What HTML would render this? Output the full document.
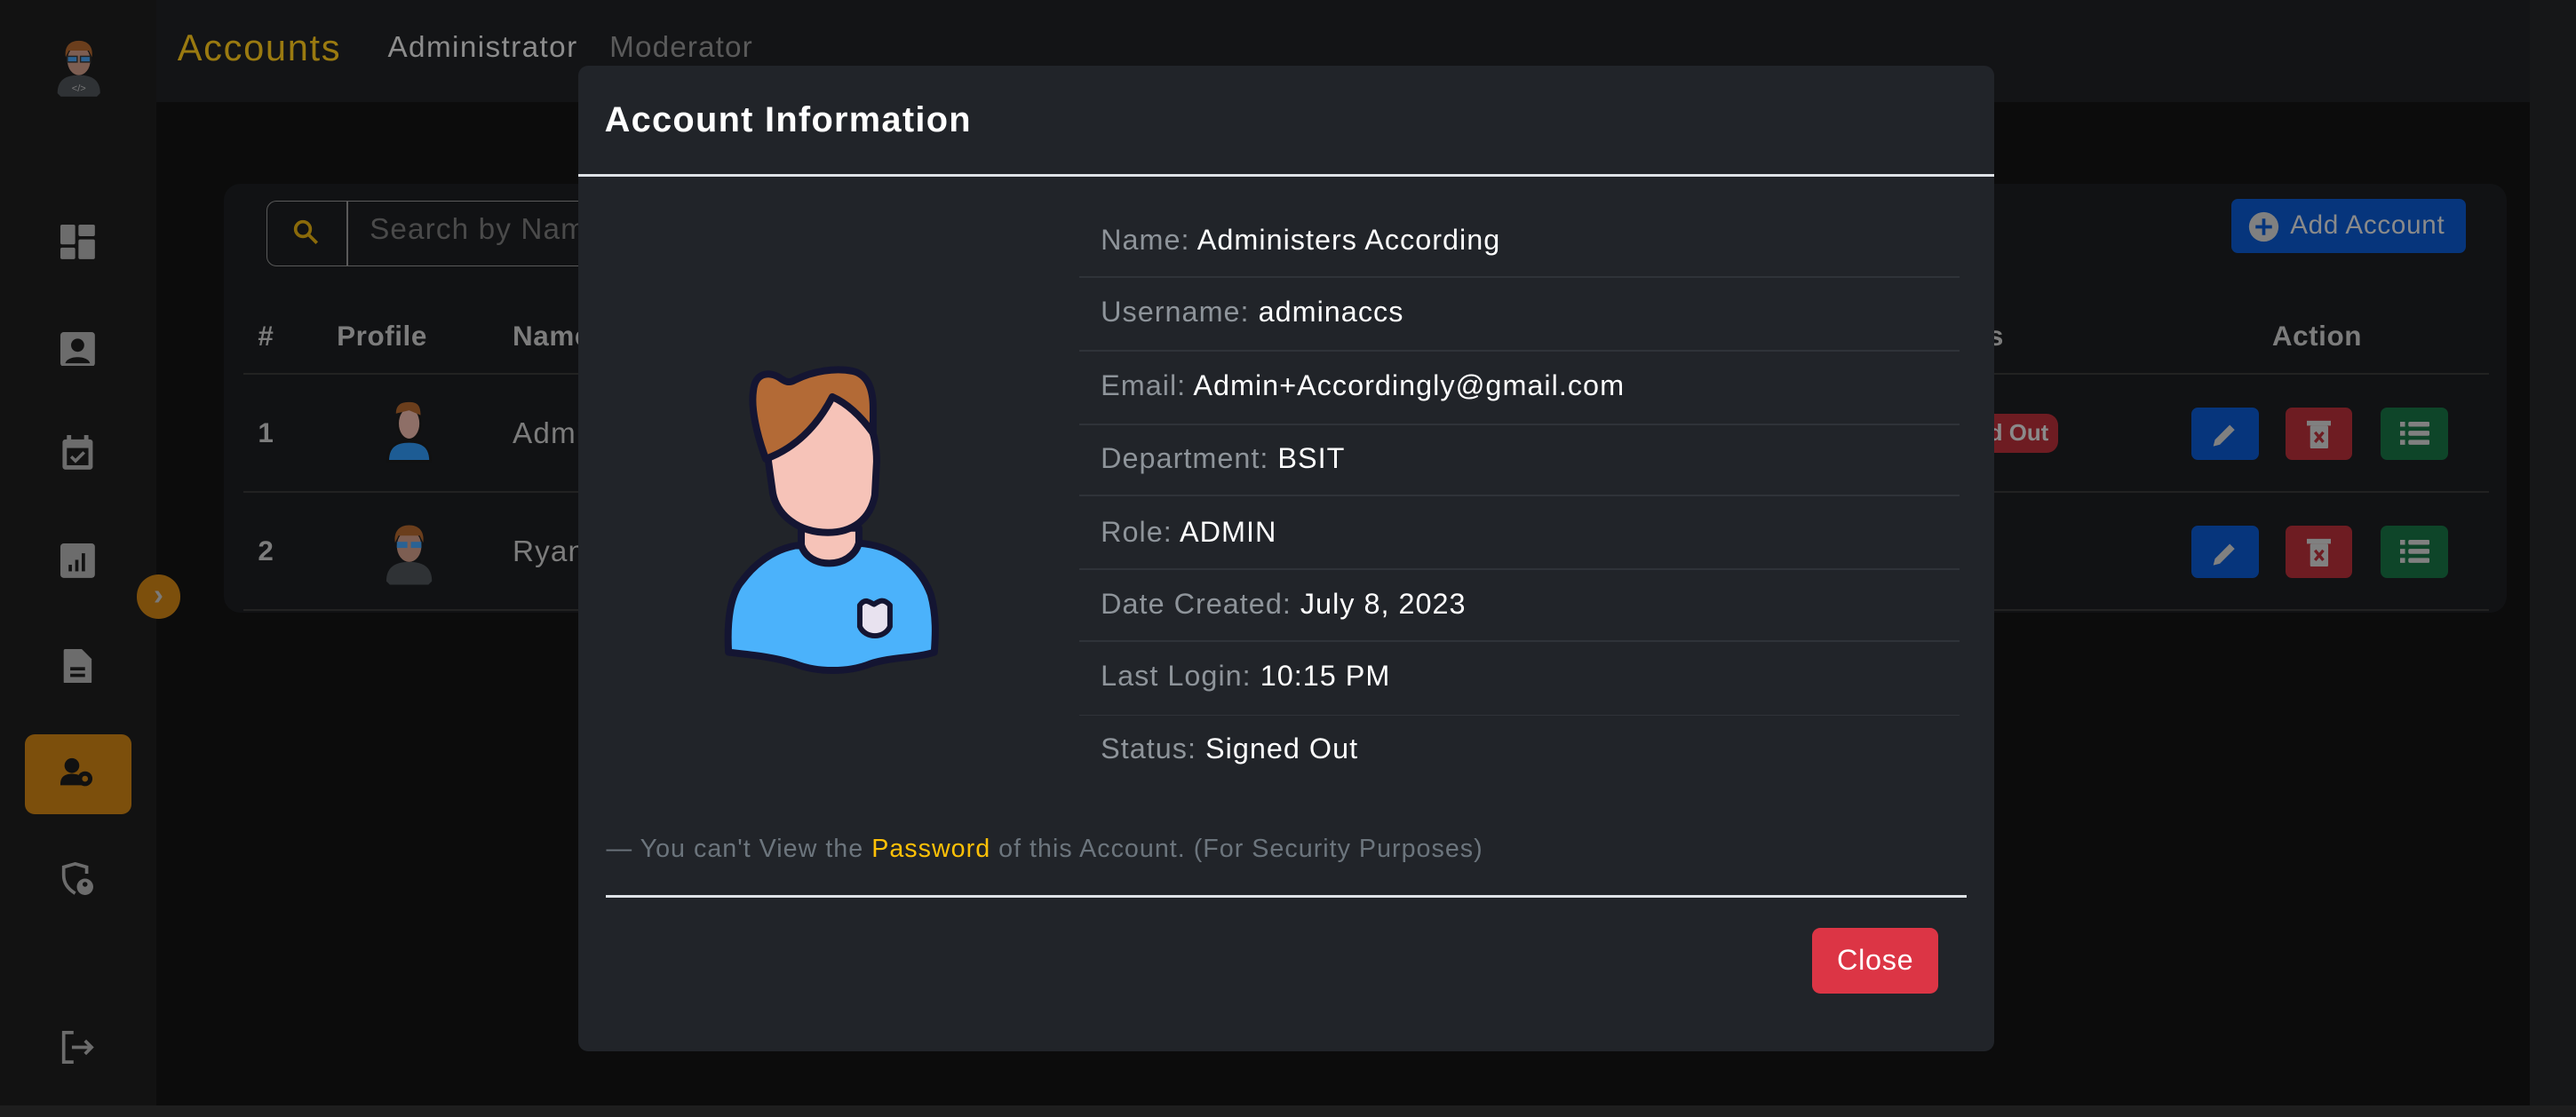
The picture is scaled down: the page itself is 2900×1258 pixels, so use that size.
<!DOCTYPE html>
<html><head><meta charset="utf-8"><style>
*{margin:0;padding:0;box-sizing:border-box}
html,body{width:2900px;height:1258px;overflow:hidden;background:#0c0c0c}
#w{zoom:1.84949;width:1568px;height:680px;position:relative;font-family:"Liberation Sans",sans-serif;overflow:hidden}
.a{position:absolute}
.ic{position:absolute;left:37px;width:21px;height:21px}
.hdr{color:#7c7c7c;font-weight:bold;font-size:17px;top:195px;letter-spacing:.3px}
.btn{position:absolute;width:41px;height:32px;border-radius:4px}
.lbl{position:absolute;left:670px;font-size:17.5px;color:#8e949a;letter-spacing:.55px}
.lbl b{font-weight:normal;color:#fff}
.sep{position:absolute;left:657px;width:536px;height:1px;background:#2f3339}
</style></head><body><div id="w">
<div class="a" style="left:0;top:0;width:95px;height:680px;background:#121212"></div>
<div class="a" style="left:95px;top:0;width:1473px;height:62px;background:#131416"></div>
<div class="a" style="left:1540px;top:0;width:28px;height:680px;background:#161718"></div>
<div class="a" style="left:0;top:673px;width:1568px;height:7px;background:#1e1e1e"></div>
<svg class="a" style="left:33px;top:24px" width="30" height="36" viewBox="0 0 30 36"><path d="M2 33c0-8 5-11 13-11s13 3 13 11l-2 2H4z" fill="#2f3235"/><ellipse cx="15" cy="13" rx="7" ry="9" fill="#7d5e52"/><path d="M7 11c-1-7 3-10 8-10s9 3 8 10l-2-4H9z" fill="#6b3e1c"/><rect x="8" y="10.5" width="6" height="3.5" fill="#2a6293" stroke="#222" stroke-width=".8"/><rect x="16" y="10.5" width="6" height="3.5" fill="#2a6293" stroke="#222" stroke-width=".8"/><text x="15" y="32" font-size="6" fill="#777" text-anchor="middle" font-family="Liberation Sans">&lt;/&gt;</text></svg>
<div class="a" style="left:108px;top:16px;font-size:22.5px;color:#9a7a10;letter-spacing:.9px">Accounts</div>
<div class="a" style="left:236px;top:19px;font-size:18px;color:#8c8c8c;letter-spacing:.75px">Administrator</div>
<div class="a" style="left:371px;top:19px;font-size:18px;color:#5a5a5a;letter-spacing:.6px">Moderator</div>
<svg class="ic" style="top:137px" viewBox="0 0 21 21" fill="#6c6c6c"><rect x="0" y="0" width="9" height="12" rx="1"/><rect x="11" y="0" width="10" height="7" rx="1"/><rect x="0" y="14" width="9" height="7" rx="1"/><rect x="11" y="9" width="10" height="12" rx="1"/></svg>
<svg class="ic" style="top:202px" viewBox="0 0 21 21"><rect x="0" y="0" width="21" height="21" rx="2" fill="#6c6c6c"/><circle cx="10.5" cy="8" r="4" fill="#121212"/><path d="M3 19c1-5 14-5 15 0z" fill="#121212"/></svg>
<svg class="ic" style="top:265px" viewBox="0 0 21 24"><rect x="0" y="3" width="21" height="21" rx="2" fill="#6c6c6c"/><rect x="3" y="9" width="15" height="12" fill="#121212"/><rect x="3" y="0" width="3" height="5" fill="#6c6c6c"/><rect x="15" y="0" width="3" height="5" fill="#6c6c6c"/><path d="M6 15l3 3 6-6" stroke="#6c6c6c" stroke-width="2.2" fill="none"/></svg>
<svg class="ic" style="top:331px" viewBox="0 0 21 21"><rect width="21" height="21" rx="2" fill="#6c6c6c"/><rect x="5" y="13" width="2" height="4" fill="#121212"/><rect x="9" y="10" width="2" height="7" fill="#121212"/><rect x="13" y="6" width="2" height="11" fill="#121212"/></svg>
<svg class="ic" style="top:395px" viewBox="0 0 21 21"><path d="M3 0h10l6 6v14a1 1 0 0 1-1 1H3a1 1 0 0 1-1-1V1a1 1 0 0 1 1-1z" fill="#6c6c6c"/><rect x="6" y="11" width="9" height="2" fill="#121212"/><rect x="6" y="15" width="9" height="2" fill="#121212"/></svg>
<div class="a" style="left:15px;top:447px;width:65px;height:49px;border-radius:6px;background:#7c4f0c"></div>
<svg class="a" style="left:37px;top:461px" width="22" height="20" viewBox="0 0 22 20" fill="#111"><circle cx="7" cy="5" r="4.5"/><path d="M0 16c0-5 4-6 7-6s5 1 6 2v5H0z"/><circle cx="15" cy="13" r="4.5"/><circle cx="15" cy="13" r="1.8" fill="#7c4f0c"/></svg>
<svg class="ic" style="top:525px" viewBox="0 0 21 21" fill="none" stroke="#6c6c6c" stroke-width="2"><path d="M9 19C4 16 2 12 2 8V3l7-2 7 2v4"/><circle cx="15" cy="15" r="5" fill="#6c6c6c" stroke="none"/><circle cx="15" cy="13.5" r="1.5" fill="#121212" stroke="none"/></svg>
<svg class="ic" style="top:628px" viewBox="0 0 21 21" fill="none" stroke="#6c6c6c" stroke-width="2"><path d="M8 1H2v18h6M7 10h12M15 6l4 4-4 4"/></svg>
<div class="a" style="left:83px;top:350px;width:27px;height:27px;border-radius:50%;background:#7c4f0c;color:#7a7a7a;font-weight:bold;font-size:18px;text-align:center;line-height:26px">›</div>
<div class="a" style="left:136px;top:112px;width:1390px;height:261px;border-radius:10px;background:#111214"></div>
<div class="a" style="left:162px;top:122px;width:230px;height:40px;border:1px solid #5a5a5a;border-radius:6px"></div>
<div class="a" style="left:211px;top:122px;width:1px;height:40px;background:#5a5a5a"></div>
<svg class="a" style="left:178px;top:133px" width="16" height="17" viewBox="0 0 16 17" fill="none" stroke="#8a6a0a" stroke-width="2"><circle cx="6.5" cy="6.5" r="4.5"/><path d="M10 10l5 5"/></svg>
<div class="a" style="left:225px;top:130px;font-size:18px;color:#4a4a4a;letter-spacing:.6px">Search by Name</div>
<div class="a" style="left:1358px;top:121px;width:143px;height:33px;border-radius:4px;background:#06357c"></div>
<svg class="a" style="left:1368px;top:128px" width="20" height="20" viewBox="0 0 20 20"><circle cx="10" cy="10" r="9" fill="#808080"/><path d="M10 5v10M5 10h10" stroke="#06357c" stroke-width="2"/></svg>
<div class="a" style="left:1394px;top:128px;font-size:16px;color:#8a8a8a;letter-spacing:.4px">Add Account</div>
<div class="a hdr" style="left:157px">#</div>
<div class="a hdr" style="left:205px">Profile</div>
<div class="a hdr" style="left:312px">Name</div>
<div class="a hdr" style="left:1210px">s</div>
<div class="a hdr" style="left:1383px">Action</div>
<div class="a" style="left:148px;top:227px;width:1367px;height:1px;background:#222"></div>
<div class="a" style="left:148px;top:299px;width:1367px;height:1px;background:#222"></div>
<div class="a" style="left:148px;top:371px;width:1367px;height:1px;background:#222"></div>
<div class="a" style="left:157px;top:254px;font-size:17px;color:#7c7c7c;font-weight:bold">1</div>
<div class="a" style="left:157px;top:326px;font-size:17px;color:#7c7c7c;font-weight:bold">2</div>
<svg class="a" style="left:233px;top:244px" width="32" height="40" viewBox="0 0 32 40"><path d="M3 37c0-9 5-12 13-12s13 3 13 12z" fill="#1d5c94" stroke="#111" stroke-width="1.5"/><ellipse cx="16" cy="14" rx="7" ry="10" fill="#8e6f67" stroke="#111" stroke-width="1.5"/><path d="M8 8c0-6 4-7 8-7s7 1 7 8l-7-3z" fill="#6b3e1c"/></svg>
<svg class="a" style="left:233px;top:318px" width="32" height="40" viewBox="0 0 30 36"><path d="M2 33c0-8 5-11 13-11s13 3 13 11l-2 2H4z" fill="#2f3235"/><ellipse cx="15" cy="13" rx="7" ry="9" fill="#7d5e52"/><path d="M7 11c-1-7 3-10 8-10s9 3 8 10l-2-4H9z" fill="#6b3e1c"/><rect x="8" y="10.5" width="6" height="3.5" fill="#2a6293"/><rect x="16" y="10.5" width="6" height="3.5" fill="#2a6293"/></svg>
<div class="a" style="left:312px;top:254px;font-size:18px;color:#7c7c7c;letter-spacing:.6px">Admin</div>
<div class="a" style="left:312px;top:326px;font-size:18px;color:#7c7c7c;letter-spacing:.6px">Ryan</div>
<div class="a" style="left:1200px;top:252px;width:53px;height:24px;border-radius:7px;background:#6e1c22;color:#8a8a8a;font-weight:bold;font-size:14px;line-height:24px;text-align:right;padding-right:6px">d Out</div>
<div class="btn" style="left:1334px;top:248px;background:#06357c"></div>
<div class="btn" style="left:1391px;top:248px;background:#6e1c22"></div>
<div class="btn" style="left:1449px;top:248px;background:#0e4529"></div>
<div class="btn" style="left:1334px;top:320px;background:#06357c"></div>
<div class="btn" style="left:1391px;top:320px;background:#6e1c22"></div>
<div class="btn" style="left:1449px;top:320px;background:#0e4529"></div>
<svg class="a" style="left:1345px;top:256px" width="18" height="18" viewBox="0 0 18 18"><path d="M2 16l1-4 9-9 3 3-9 9z" fill="#808080"/></svg>
<svg class="a" style="left:1345px;top:328px" width="18" height="18" viewBox="0 0 18 18"><path d="M2 16l1-4 9-9 3 3-9 9z" fill="#808080"/></svg>
<svg class="a" style="left:1404px;top:255px" width="15" height="18" viewBox="0 0 15 18"><rect x="0" y="1" width="15" height="3" fill="#808080"/><rect x="2" y="4" width="11" height="14" rx="1" fill="#808080"/><path d="M5 8l5 6M10 8l-5 6" stroke="#6e1c22" stroke-width="1.8"/></svg>
<svg class="a" style="left:1404px;top:327px" width="15" height="18" viewBox="0 0 15 18"><rect x="0" y="1" width="15" height="3" fill="#808080"/><rect x="2" y="4" width="11" height="14" rx="1" fill="#808080"/><path d="M5 8l5 6M10 8l-5 6" stroke="#6e1c22" stroke-width="1.8"/></svg>
<svg class="a" style="left:1461px;top:257px" width="18" height="14" viewBox="0 0 18 14" fill="#808080"><rect x="0" y="0" width="3" height="3"/><rect x="5" y="0" width="13" height="3" rx="1"/><rect x="0" y="5.5" width="3" height="3"/><rect x="5" y="5.5" width="13" height="3" rx="1"/><rect x="0" y="11" width="3" height="3"/><rect x="5" y="11" width="13" height="3" rx="1"/></svg>
<svg class="a" style="left:1461px;top:329px" width="18" height="14" viewBox="0 0 18 14" fill="#808080"><rect x="0" y="0" width="3" height="3"/><rect x="5" y="0" width="13" height="3" rx="1"/><rect x="0" y="5.5" width="3" height="3"/><rect x="5" y="5.5" width="13" height="3" rx="1"/><rect x="0" y="11" width="3" height="3"/><rect x="5" y="11" width="13" height="3" rx="1"/></svg>
<!-- modal -->
<div class="a" style="left:352px;top:40px;width:862px;height:600px;border-radius:6px;background:#212429"></div>
<div class="a" style="left:368px;top:61px;font-size:21.5px;color:#fff;font-weight:bold;letter-spacing:.7px">Account Information</div>
<div class="a" style="left:352px;top:106px;width:862px;height:1.5px;background:#dee2e6"></div>
<svg class="a" style="left:421.7px;top:205.5px" width="173" height="216" viewBox="0 0 320 400">
<g stroke="#141532" stroke-width="8" stroke-linejoin="round">
<path d="M122 215v40a32 32 0 0 0 65 0v-40z" fill="#f6c3b8"/>
<path d="M40 355 C38 320 42 290 55 275 C75 248 100 236 122 234 C130 262 178 262 187 232 C225 235 255 255 268 290 C275 315 273 340 272 355 C250 362 225 360 200 368 C175 378 140 378 115 368 C90 360 65 358 40 355 Z" fill="#4bb2fb"/>
<path d="M85 140 C82 95 115 66 150 66 C190 66 207 100 207 140 L205 178 C200 205 180 220 152 220 C118 220 95 200 90 176 Z" fill="#f6c3b8"/>
<path d="M82 137 C72 110 65 80 68 60 C70 40 85 38 97 45 C104 50 108 52 115 48 C135 38 160 34 180 38 C198 42 203 60 203 80 L203 108 C190 90 175 75 157 67 C140 100 115 125 82 137 Z" fill="#b36a36"/>
<path d="M188 302 C194 294 198 298 204 301 C210 297 215 294 222 302 L222 326 C216 340 194 340 188 326 Z" fill="#e8e2ef" stroke-width="6"/>
</g></svg>
<div class="lbl" style="top:136px">Name: <b>Administers According</b></div>
<div class="sep" style="top:168px"></div>
<div class="lbl" style="top:180px">Username: <b>adminaccs</b></div>
<div class="sep" style="top:213px"></div>
<div class="lbl" style="top:225px">Email: <b>Admin+Accordingly@gmail.com</b></div>
<div class="sep" style="top:258px"></div>
<div class="lbl" style="top:269px">Department: <b>BSIT</b></div>
<div class="sep" style="top:301px"></div>
<div class="lbl" style="top:314px">Role: <b>ADMIN</b></div>
<div class="sep" style="top:346px"></div>
<div class="lbl" style="top:358px">Date Created: <b>July 8, 2023</b></div>
<div class="sep" style="top:390px"></div>
<div class="lbl" style="top:402px">Last Login: <b>10:15 PM</b></div>
<div class="sep" style="top:435px"></div>
<div class="lbl" style="top:446px">Status: <b>Signed Out</b></div>
<div class="a" style="left:369px;top:508px;font-size:15.5px;color:#6c757d;letter-spacing:.55px">— You can't View the <span style="color:#ffc107">Password</span> of this Account. (For Security Purposes)</div>
<div class="a" style="left:369px;top:545px;width:828px;height:1.5px;background:#dee2e6"></div>
<div class="a" style="left:1103px;top:565px;width:77px;height:40px;border-radius:5px;background:#dc3545;color:#fff;font-size:17.5px;text-align:center;line-height:40px;letter-spacing:.4px">Close</div>
</div></body></html>
